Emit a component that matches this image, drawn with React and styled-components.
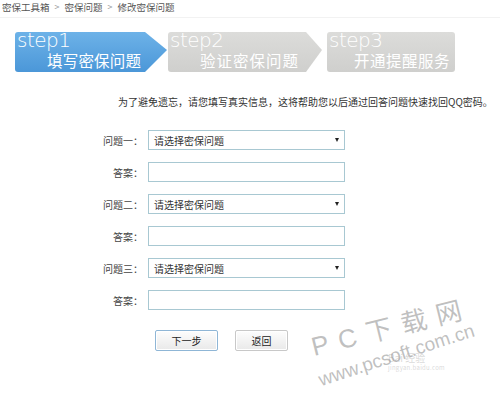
import React from "react";
import styled, { createGlobalStyle } from "styled-components";

const GlobalStyle = createGlobalStyle`
  html, body {
    margin: 0;
    padding: 0;
    background: #ffffff;
  }
  body {
    font-family: "Noto Sans CJK SC", "Liberation Sans", sans-serif;
    color: #333;
  }
`;

const Page = styled.div`
  position: relative;
  width: 500px;
  height: 395px;
  overflow: hidden;
`;

const Crumbs = styled.div`
  display: flex;
  align-items: center;
  gap: 5px;
  padding: 0 0 3px 2px;
  height: 14px;
  font-size: 9.5px;
  line-height: 14px;
  color: #555;
  border-bottom: 1px solid #f2f2f2;
`;

const Sep = styled.span`
  color: #999;
  font-size: 9px;
`;

const Steps = styled.div`
  display: flex;
  margin: 14px 0 0 15px;
`;

const Step = styled.div`
  position: relative;
  width: ${(p) => p.$w}px;
  height: 40px;
  margin-right: ${(p) => p.$gap}px;
  background: ${(p) =>
    p.$active
      ? "linear-gradient(#6db2e8, #4b97d8)"
      : "linear-gradient(#dcdcda, #cfcfcd)"};
  clip-path: ${(p) =>
    p.$tip
      ? `polygon(0 0, ${p.$w - p.$tip}px 0, 100% 45%, ${p.$w - p.$tip}px 100%, 0 100%)`
      : "none"};
  border-radius: 3px;
  color: #fff;
  display: flex;
  flex-direction: column;
`;

const StepNo = styled.div`
  font-family: "DejaVu Sans", "Liberation Sans", sans-serif;
  font-weight: 200;
  font-size: 20px;
  line-height: 22px;
  letter-spacing: -0.5px;
  margin: -3px 0 0 2px;
`;

const StepName = styled.div`
  font-size: 15.5px;
  line-height: 18px;
  letter-spacing: ${(p) => p.$ls}px;
  padding-left: ${(p) => p.$indent}px;
`;

const Form = styled.div`
  display: flex;
  flex-direction: column;
  margin-top: 23px;
`;

const Intro = styled.div`
  font-size: 10px;
  line-height: 14px;
  white-space: nowrap;
  color: #333;
  padding-left: 118px;
  margin-bottom: 21px;
`;

const Rows = styled.div`
  display: flex;
  flex-direction: column;
  gap: 12px;
`;

const Row = styled.div`
  display: flex;
  align-items: center;
  height: 20px;
`;

const Label = styled.div`
  width: 143px;
  text-align: right;
  font-size: 10px;
  color: #444;
  margin-right: 5px;
`;

const Select = styled.div`
  box-sizing: border-box;
  width: 197px;
  height: 20px;
  border: 1px solid #a8c8d2;
  display: flex;
  align-items: center;
  justify-content: space-between;
  padding: 0 5px;
  font-size: 10px;
  color: #333;
  background: #fff;
`;

const Caret = styled.span`
  width: 0;
  height: 0;
  border-left: 2.5px solid transparent;
  border-right: 2.5px solid transparent;
  border-top: 4px solid #222;
`;

const Input = styled.div`
  box-sizing: border-box;
  width: 197px;
  height: 20px;
  border: 1px solid #a8c8d2;
  background: #fff;
`;

const Buttons = styled.div`
  display: flex;
  gap: 17px;
  margin: 20px 0 0 155px;
`;

const Button = styled.div`
  box-sizing: border-box;
  width: ${(p) => p.$w}px;
  height: 21px;
  display: flex;
  align-items: center;
  justify-content: center;
  font-size: 10px;
  color: #222;
  border: 1px solid ${(p) => (p.$primary ? "#8fb6d6" : "#c8c8c8")};
  border-radius: 2px;
  background: linear-gradient(#fdfdfd, #e9e9e9);
  box-shadow: inset 0 0 0 1px #fff;
`;

const Watermark = styled.div`
  position: absolute;
  left: ${(p) => p.$x}px;
  top: ${(p) => p.$y}px;
  transform: rotate(${(p) => p.$r}deg);
  transform-origin: left bottom;
  color: rgba(150, 150, 150, 0.6);
  font-family: "Liberation Sans", "Noto Sans CJK SC", sans-serif;
  font-size: ${(p) => p.$size}px;
  line-height: 1;
  letter-spacing: ${(p) => p.$ls}px;
  white-space: nowrap;
  pointer-events: none;
`;

const Faint = styled.div`
  position: absolute;
  left: 388px;
  top: 352px;
  display: flex;
  flex-direction: column;
  color: rgba(185, 185, 185, 0.55);
  font-size: 10px;
  line-height: 12px;
  white-space: nowrap;
`;

const FaintSub = styled.span`
  font-size: 6px;
  line-height: 8px;
  letter-spacing: 0.3px;
`;

const questions = ["问题一：", "问题二：", "问题三："];

export default function App() {
  return (
    <Page>
      <GlobalStyle />
      <Crumbs>
        <span>密保工具箱</span>
        <Sep>&gt;</Sep>
        <span>密保问题</span>
        <Sep>&gt;</Sep>
        <span>修改密保问题</span>
      </Crumbs>

      <Steps>
        <Step $active $tip={22} $w={152} $gap={1}>
          <StepNo>step1</StepNo>
          <StepName $indent={32} $ls={0.2}>填写密保问题</StepName>
        </Step>
        <Step $tip={16} $w={154} $gap={5}>
          <StepNo>step2</StepNo>
          <StepName $indent={32} $ls={1}>验证密保问题</StepName>
        </Step>
        <Step $w={128} $gap={0}>
          <StepNo>step3</StepNo>
          <StepName $indent={27} $ls={0.5}>开通提醒服务</StepName>
        </Step>
      </Steps>

      <Form>
        <Intro>
          为了避免遗忘，请您填写真实信息，这将帮助您以后通过回答问题快速找回QQ密码。
        </Intro>
        <Rows>
          {questions.map((q) => (
            <React.Fragment key={q}>
              <Row>
                <Label>{q}</Label>
                <Select>
                  <span>请选择密保问题</span>
                  <Caret />
                </Select>
              </Row>
              <Row>
                <Label>答案：</Label>
                <Input />
              </Row>
            </React.Fragment>
          ))}
        </Rows>
        <Buttons>
          <Button $primary $w={63}>
            下一步
          </Button>
          <Button $w={53}>返回</Button>
        </Buttons>
      </Form>

      <Faint>
        <span>Bai 经验</span>
        <FaintSub>jingyan.baidu.com</FaintSub>
      </Faint>
      <Watermark $x={315} $y={334} $r={-14} $size={26} $ls={10}>
        PC下载网
      </Watermark>
      <Watermark $x={322} $y={370} $r={-18} $size={19} $ls={0}>
        www.pcsoft.com.cn
      </Watermark>
    </Page>
  );
}
